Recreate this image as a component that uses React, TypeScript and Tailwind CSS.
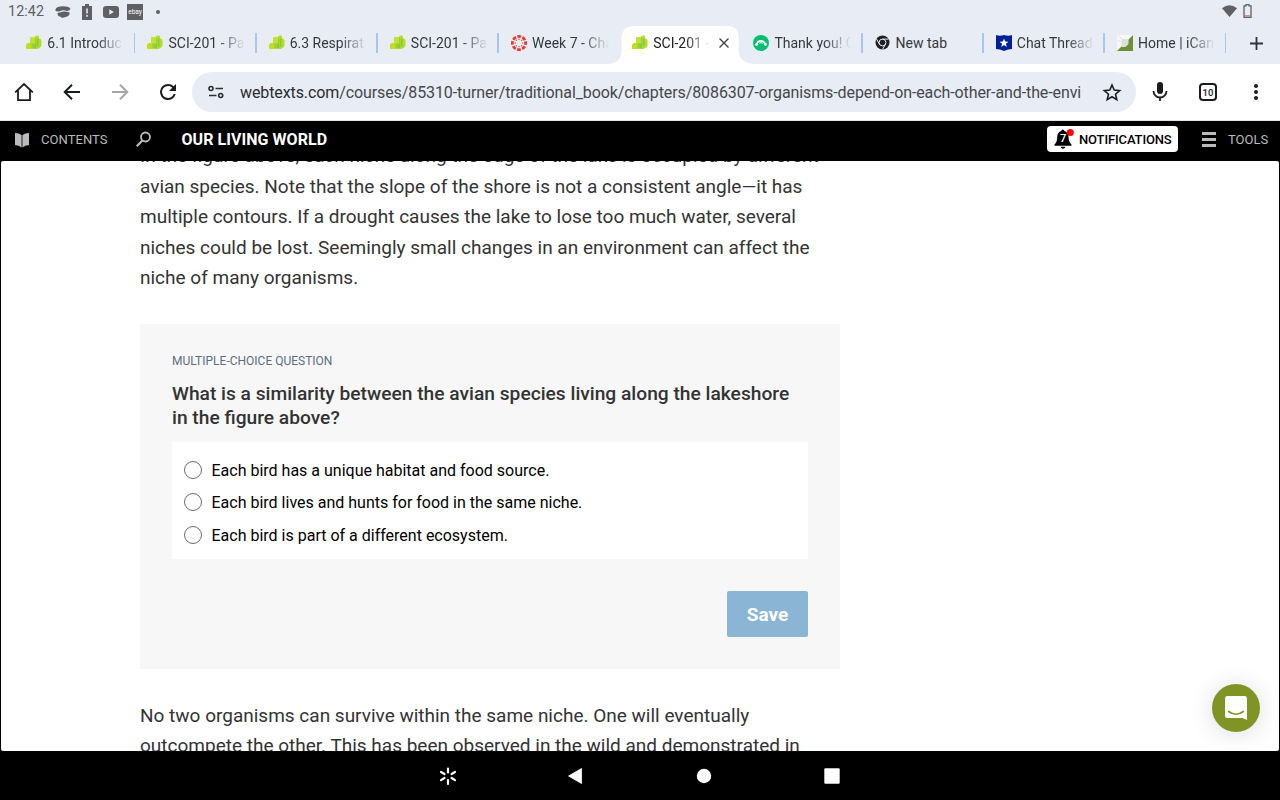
import type { ReactNode } from 'react';
import { clsx } from 'clsx';

type Favicon = 'leaf' | 'canvas' | 'monkey' | 'chrome' | 'shield' | 'campus';

interface Tab {
  title: string;
  icon: Favicon;
  active?: boolean;
  divider?: boolean;
}

const tabs: Tab[] = [
  { title: '6.1 Introduc', icon: 'leaf', divider: true },
  { title: 'SCI-201 - Pa', icon: 'leaf', divider: true },
  { title: '6.3 Respirat', icon: 'leaf', divider: true },
  { title: 'SCI-201 - Pa', icon: 'leaf', divider: true },
  { title: 'Week 7 - Cha', icon: 'canvas' },
  { title: 'SCI-201 -', icon: 'leaf', active: true },
  { title: 'Thank you! C', icon: 'monkey', divider: true },
  { title: 'New tab', icon: 'chrome', divider: true },
  { title: 'Chat Thread', icon: 'shield', divider: true },
  { title: 'Home | iCam', icon: 'campus', divider: true },
];

const answers = [
  'Each bird has a unique habitat and food source.',
  'Each bird lives and hunts for food in the same niche.',
  'Each bird is part of a different ecosystem.',
];

function TabIcon({ icon }: { icon: Favicon }) {
  const props = { viewBox: '0 0 16 16', className: 'h-4 w-4 shrink-0' };
  switch (icon) {
    case 'leaf':
      return (
        <svg {...props}>
          <path d="M4 3q0-1 1-1h4v7H4z" fill="#c3e035" />
          <path d="M0 10.500Q0 8 2.500 8H9v4q-1 2-3 2H.8Q0 14 0 13z" fill="#c1dd22" />
          <path d="M9 2q0-1.500 1.500-1.500h1.700Q13 .5 13 2v1.500q2.500 0 2.500 2.500v4q0 2-2 3l-2 1H9z" fill="#b3dc2c" />
          <path d="M5.500 8.500H9V3.200l1-1.200v11l-1 1-3.500-1z" fill="#96d236" />
          <path d="M8.200 9h1.900v4H8.200zM10.800 3.500h1.700v8h-1.700z" fill="#86ca3d" />
        </svg>
      );
    case 'canvas':
      return (
        <svg {...props}>
          <circle cx="8" cy="8" r="6.600" fill="none" stroke="#e63b32" strokeWidth="2.800" strokeDasharray="3.700 1.483" strokeDashoffset="1.850" />
          <g fill="#e63b32">
            <circle cx="8" cy="4.200" r=".7" />
            <circle cx="8" cy="11.800" r=".7" />
            <circle cx="4.200" cy="8" r=".7" />
            <circle cx="11.800" cy="8" r=".7" />
            <circle cx="5.300" cy="5.300" r=".7" />
            <circle cx="10.700" cy="5.300" r=".7" />
            <circle cx="5.300" cy="10.700" r=".7" />
            <circle cx="10.700" cy="10.700" r=".7" />
          </g>
        </svg>
      );
    case 'monkey':
      return (
        <svg {...props}>
          <circle cx="8" cy="8" r="8" fill="#05bf6f" />
          <path d="M3.800 9.300a4.300 4.300 0 0 1 8.400 0" fill="none" stroke="#fff" strokeWidth="1.700" />
          <circle cx="3.600" cy="9.500" r="1.400" fill="#fff" />
          <circle cx="12.400" cy="9.500" r="1.400" fill="#fff" />
          <path d="M6.200 8.300q1.800-1.300 3.600 0" fill="none" stroke="#fff" />
        </svg>
      );
    case 'chrome':
      return (
        <svg {...props}>
          <circle cx="7.500" cy="7.500" r="7" fill="#202124" />
          <circle cx="7.500" cy="7.500" r="3.400" fill="none" stroke="#e8ecf5" />
          <path d="M7.500 4.100h6M4.500 9.200 1.500 4M10.500 9.200l-3 5.200" stroke="#e8ecf5" fill="none" />
          <circle cx="7.500" cy="7.500" r="2" fill="#202124" />
        </svg>
      );
    case 'shield':
      return (
        <svg {...props}>
          <path d="M0 0q4 1.500 8 0 4 1.500 8 0v14q-4 0-8 2-4-2-8-2z" fill="#021f9c" />
          <path d="m8 3.600 1.200 3 3.200.2-2.500 2 .9 3.100L8 10.100l-2.800 1.800.9-3.100-2.500-2 3.200-.2z" fill="#fff" />
        </svg>
      );
    case 'campus':
      return (
        <svg {...props}>
          <path d="M0 0h16L0 16z" fill="#f7f8f6" />
          <path d="M16 0v16H0z" fill="#6e8f36" />
          <path d="M4.500 4h7v5l-3 3h-4z" fill="#dde1db" />
          <path d="m2 1 3 3M1 5l3 2" stroke="#e1e4df" />
        </svg>
      );
  }
}

function BrowserTab({ title, icon, active, divider }: Tab) {
  return (
    <div className="relative flex h-[38px] w-[121.200px] shrink-0 items-center pl-3">
      {active && (
        <svg className="absolute -left-3 top-0 h-[38px] w-[146px]" viewBox="0 0 146 38">
          <path d="M0 38Q13.700 37 13.700 24V12Q14 0 26 0h93q11.700 0 11.700 12v12q0 13 15.300 14z" fill="#fff" />
        </svg>
      )}
      <span className="relative -mt-1">
        <TabIcon icon={icon} />
      </span>
      <span
        className={clsx(
          'relative -mt-1 ml-[5px] whitespace-nowrap text-[14px] leading-5 text-[#36383b]',
          active ? 'w-[57px] text-[#202124]' : 'w-[77px]',
          title !== 'New tab' &&
            (active
              ? '[mask-image:linear-gradient(to_right,#000_58%,transparent_100%)]'
              : '[mask-image:linear-gradient(to_right,#000_65%,transparent_100%)]')
        )}
      >
        {title}
      </span>
      {active && (
        <svg className="relative -mt-1 ml-[9px] h-[10px] w-[10px]" viewBox="0 0 10 10" stroke="#3f4247" strokeWidth="1.400">
          <path d="m.5.5 9 9m0-9-9 9" />
        </svg>
      )}
      {divider && <span className="absolute right-0 top-[7px] h-5 w-[1.600px] bg-[#a8c4f0]" />}
    </div>
  );
}

function StatusBar() {
  return (
    <div className="flex h-[26px] items-center justify-between pl-2 pr-7 text-[#5f6063]">
      <div className="-mt-0.5 flex h-6 items-center">
        <span className="w-[47px] text-[14.300px] tracking-[0.1px]">12:42</span>
        <svg className="h-4 w-4" viewBox="0 0 16 16" fill="#5f6063">
          <path d="M.3 6.500Q.5 2.300 8 2.300q6.500 0 7.500 2.500-1 2.200-3.500 2.200Q8 5.300 4.800 7.200 1.500 8 .3 6.500z" />
          <path d="M4.500 8.600Q10 6.300 14.500 8.600q.8 3.400-3.700 4.300l-4.300 1.200v-1.200q-4.500-.5-4-3.900z" />
        </svg>
        <svg className="ml-2 h-4 w-4" viewBox="0 0 16 16" fill="#5f6063">
          <path d="M6 0h4v2h3v14H3V2h3z" />
          <path d="M7.200 4.500h1.600v5H7.200zM7.200 11h1.600v1.700H7.200z" fill="#e8ecf5" />
        </svg>
        <svg className="ml-2 h-4 w-4" viewBox="0 0 16 16">
          <rect y="2" width="16" height="12" rx="3" fill="#5f6063" />
          <path d="m6.300 5.300 4.500 2.700-4.500 2.700z" fill="#e8ecf5" />
        </svg>
        <span className="ml-2 flex h-4 w-4 items-center justify-center bg-[#5f6063] text-[6.500px] leading-none tracking-[-0.1px] text-white">
          ebay
        </span>
        <span className="ml-[13px] h-1 w-1 rounded-full bg-[#5f6063]" />
      </div>
      <div className="-mt-[5px] flex h-[22px] items-center">
        <svg className="mt-px h-3 w-[15px]" viewBox="0 0 15 12" fill="#5f6063">
          <path d="M0 3.200q7.500-6 15 0L7.500 12z" />
        </svg>
        <svg className="ml-[6px] h-[14px] w-[9px]" viewBox="0 0 9 14">
          <path d="M3 .5h3v1.300h2v11.500H1V1.800h2z" fill="none" stroke="#5f6063" strokeWidth="1.300" />
          <path d="M1.700 11.300h5.600v1.200H1.700z" fill="#d06a50" />
        </svg>
      </div>
    </div>
  );
}

function Toolbar() {
  return (
    <div className="flex h-14 items-center bg-white pl-3 text-[#1b1c1e]">
      <div className="flex w-[180px] items-center gap-6">
        <svg className="h-6 w-6" viewBox="0 0 24 24" fill="none" stroke="#1b1c1e" strokeWidth="1.800">
          <path d="M3.200 12.300 12 4l8.800 8.300M6 10v10.100h12V10" />
        </svg>
        <svg className="h-6 w-6" viewBox="0 0 24 24" fill="none" stroke="#1b1c1e" strokeWidth="2">
          <path d="M20 12H5M12 4.700 4.700 12l7.300 7.300" />
        </svg>
        <svg className="h-6 w-6" viewBox="0 0 24 24" fill="none" stroke="#a5a6a8" strokeWidth="2">
          <path d="M4 12h15M12 4.700l7.300 7.300-7.300 7.300" />
        </svg>
        <svg className="h-6 w-6" viewBox="0 0 24 24" fill="#1b1c1e">
          <path d="M17.650 6.350A7.960 7.960 0 0 0 12 4a8 8 0 1 0 7.730 10h-2.080A6 6 0 1 1 12 6c1.660 0 3.140.69 4.220 1.780L13 11h7V4z" />
        </svg>
      </div>
      <div className="flex h-10 w-[944px] items-center rounded-full bg-[#e8ecf5] pl-4 pr-3">
        <svg className="h-4 w-4" viewBox="0 0 16 16" fill="none" stroke="#2c2d30" strokeWidth="1.600">
          <circle cx="3" cy="4.500" r="2" />
          <path d="M7.500 4.500H15M1 11.500h7.500" />
          <circle cx="12.700" cy="11.500" r="2" />
        </svg>
        <span className="ml-4 mt-0.5 w-[844px] whitespace-nowrap text-[16px] tracking-[-0.1px] text-[#45484b]">
          <span className="text-[#2a2b2e]">webtexts.com</span>/courses/85310-turner/traditional_book/chapters/8086307-organisms-depend-on-each-other-and-the-envi
        </span>
        <svg className="ml-auto h-6 w-6" viewBox="0 0 24 24" fill="none" stroke="#1b1c1e" strokeWidth="1.600">
          <path d="m12 5 2.200 5.100 5.500.5-4.200 3.600 1.300 5.400L12 16.700l-4.800 2.900 1.300-5.400-4.200-3.600 5.500-.5z" />
        </svg>
      </div>
      <svg className="ml-3 h-6 w-6" viewBox="0 0 24 24" fill="#1b1c1e">
        <rect x="9" y="2" width="6" height="12" rx="3" />
        <path d="M5.500 11a6.500 6.500 0 0 0 13 0M12 17.500V21" fill="none" stroke="#1b1c1e" strokeWidth="1.800" />
      </svg>
      <div className="ml-[27px] flex h-[18px] w-[18px] items-center justify-center rounded-[4px] border-2 border-[#1b1c1e] pt-px text-[9.500px] font-medium leading-none">
        10
      </div>
      <svg className="ml-[27px] h-6 w-6" viewBox="0 0 24 24" fill="#1b1c1e">
        <circle cx="12" cy="6" r="2" />
        <circle cx="12" cy="12" r="2" />
        <circle cx="12" cy="18" r="2" />
      </svg>
    </div>
  );
}

function BookHeader() {
  return (
    <header className="relative flex h-10 shrink-0 items-center justify-between bg-black pb-0.5 pl-[15px] pr-3 text-[13px] text-[#b9bbbd]">
      <div className="flex items-center">
        <svg className="-mt-px h-4 w-[14px]" viewBox="0 0 14 16">
          <path d="M0 1q4 0 6.500 2v12.500Q4 13 0 13zM14 1q-4 0-6.500 2v12.500Q10 13 14 13z" fill="#b9bbbd" />
          <path d="M6.300 3h1.400v12H6.300z" fill="#777" />
        </svg>
        <span className="ml-3 w-[67px] whitespace-nowrap tracking-[0.050px]">CONTENTS</span>
        <svg className="-mt-0.5 ml-[28px] h-4 w-4" viewBox="0 0 16 16" fill="none" stroke="#b9bbbd">
          <circle cx="9.500" cy="6" r="4.500" strokeWidth="1.800" />
          <path d="m6.300 9.500-5.500 5.800" strokeWidth="2.200" />
        </svg>
        <span className="ml-[29.500px] whitespace-nowrap text-[16px] font-bold tracking-[0.050px] text-white">OUR LIVING WORLD</span>
      </div>
      <div className="flex items-center">
        <div className="-mt-0.5 flex h-[26px] w-[131px] items-center rounded-[4px] bg-white pl-[7px] text-black">
          <span className="relative h-5 w-[19px]">
            <svg className="h-5 w-5" viewBox="0 0 20 20">
              <path d="M7.300 2q0-1.500 1.500-1.500T10.300 2q4 1 4.200 6 0 5 3 7.500v1.200H.5v-1.200Q3 13.500 3.200 8 3.500 3 7.300 2zM6.500 17.800h5q-.8 2-2.500 2t-2.500-2z" fill="#000" />
              <circle cx="16.300" cy="3.600" r="3.500" fill="#f00" />
            </svg>
            <span className="absolute left-[6px] top-[4px] text-[11px] font-medium leading-none text-white">7</span>
          </span>
          <span className="ml-[6px] mt-px whitespace-nowrap text-[13px] font-medium tracking-[-0.130px]">NOTIFICATIONS</span>
        </div>
        <div className="-mt-0.5 ml-6 flex h-[15px] w-[14px] flex-col justify-between">
          <span className="h-[3px] bg-[#b9bbbd]" />
          <span className="h-[3px] bg-[#b9bbbd]" />
          <span className="h-[3px] bg-[#b9bbbd]" />
        </div>
        <span className="ml-[12px] w-10 whitespace-nowrap">TOOLS</span>
      </div>
    </header>
  );
}

function Line({ children }: { children: ReactNode }) {
  return <span className="block whitespace-nowrap">{children}</span>;
}

function QuestionCard() {
  return (
    <section className="mt-[30.600px] h-[345px] w-[700px] bg-[#f7f7f7] px-8 pt-7">
      <div className="text-[12px] leading-[18px] text-[#5c6f7f]">MULTIPLE-CHOICE QUESTION</div>
      <h2 className="mt-3 text-[19.200px] font-medium leading-6 text-[#333]">
        <Line>What is a similarity between the avian species living along the lakeshore</Line>
        <Line>in the figure above?</Line>
      </h2>
      <div className="mt-3 flex h-[117px] flex-col bg-white pl-3 pt-[11.700px]">
        {answers.map((answer) => (
          <label key={answer} className="flex h-[32.500px] items-center text-[16px] text-black">
            <span className="mr-[9.500px] h-[18px] w-[18px] rounded-full border border-[#6b6b6b] bg-white" />
            <span className="pt-[1.400px]">{answer}</span>
          </label>
        ))}
      </div>
      <div className="mt-8 flex justify-end">
        <button className="h-[46px] w-[81px] rounded-[2px] bg-[#8ab5d4] pt-0.5 text-[19px] font-bold text-white">Save</button>
      </div>
    </section>
  );
}

function ChatButton() {
  return (
    <button className="absolute bottom-[19px] right-[19px] flex h-12 w-12 items-center justify-center rounded-full bg-[#7f9424] shadow-[0_2px_24px_rgba(0,0,0,0.14)]">
      <svg className="h-6 w-[22px]" viewBox="0 0 22 24">
        <path d="M2.500 0h17q2.500 0 2.500 2.500V24l-4.500-2h-15Q0 22 0 19.500v-17Q0 0 2.500 0z" fill="#fff" />
        <path d="M3.700 15.500q7.300 5.500 14.600 0" fill="none" stroke="#7f9424" strokeWidth="1.600" strokeLinecap="round" />
      </svg>
    </button>
  );
}

function SystemNav() {
  return (
    <nav className="flex h-[49px] shrink-0 items-center justify-center gap-[104px] bg-black">
      <svg className="h-6 w-6" viewBox="0 0 24 24" stroke="#fff" strokeWidth="2.200" strokeLinecap="round">
        <path d="M12 4.500V8.500M12 16V20M5 8l3.500 2M15.600 14l3.400 2.100M5 16.100 8.500 14M15.600 10 19 8" />
      </svg>
      <svg className="h-6 w-6" viewBox="0 0 24 24" fill="#fff">
        <path d="M17.500 4.500v15L4.500 12z" stroke="#fff" strokeWidth=".8" strokeLinejoin="round" />
      </svg>
      <svg className="h-6 w-6" viewBox="0 0 24 24" fill="#fff">
        <circle cx="12" cy="12" r="7.200" />
      </svg>
      <svg className="h-6 w-6" viewBox="0 0 24 24" fill="#fff">
        <rect x="4.300" y="4.300" width="15.400" height="15.400" rx="1" />
      </svg>
    </nav>
  );
}

export default function App() {
  return (
    <div className="flex h-[800px] w-[1280px] flex-col overflow-hidden bg-black font-[Roboto,sans-serif]">
      <div className="h-[121px] shrink-0 border-b border-[#dfe6ea] bg-[#e8ecf5]">
        <StatusBar />
        <div className="flex h-[38px] pl-[14.300px]">
          {tabs.map((tab, i) => (
            <BrowserTab key={i} {...tab} />
          ))}
          <svg className="ml-[23.500px] mt-[10.500px] h-[13px] w-[13px]" viewBox="0 0 13 13" stroke="#303236" strokeWidth="1.800">
            <path d="M6.500 0v13M0 6.500h13" />
          </svg>
        </div>
        <Toolbar />
      </div>
      <BookHeader />
      <main className="relative mx-px h-[590px] overflow-hidden rounded-[2px] bg-white pl-[139px] text-[#333]">
        <p className="-mt-[19.600px] text-[19px] leading-[30.400px]">
          <Line>In the figure above, each niche along the edge of the lake is occupied by different</Line>
          <Line>avian species. Note that the slope of the shore is not a consistent angle—it has</Line>
          <Line>multiple contours. If a drought causes the lake to lose too much water, several</Line>
          <Line>niches could be lost. Seemingly small changes in an environment can affect the</Line>
          <Line>niche of many organisms.</Line>
        </p>
        <QuestionCard />
        <p className="mt-8 text-[19px] leading-[30.400px]">
          <Line>No two organisms can survive within the same niche. One will eventually</Line>
          <Line>outcompete the other. This has been observed in the wild and demonstrated in</Line>
        </p>
        <ChatButton />
      </main>
      <SystemNav />
    </div>
  );
}
